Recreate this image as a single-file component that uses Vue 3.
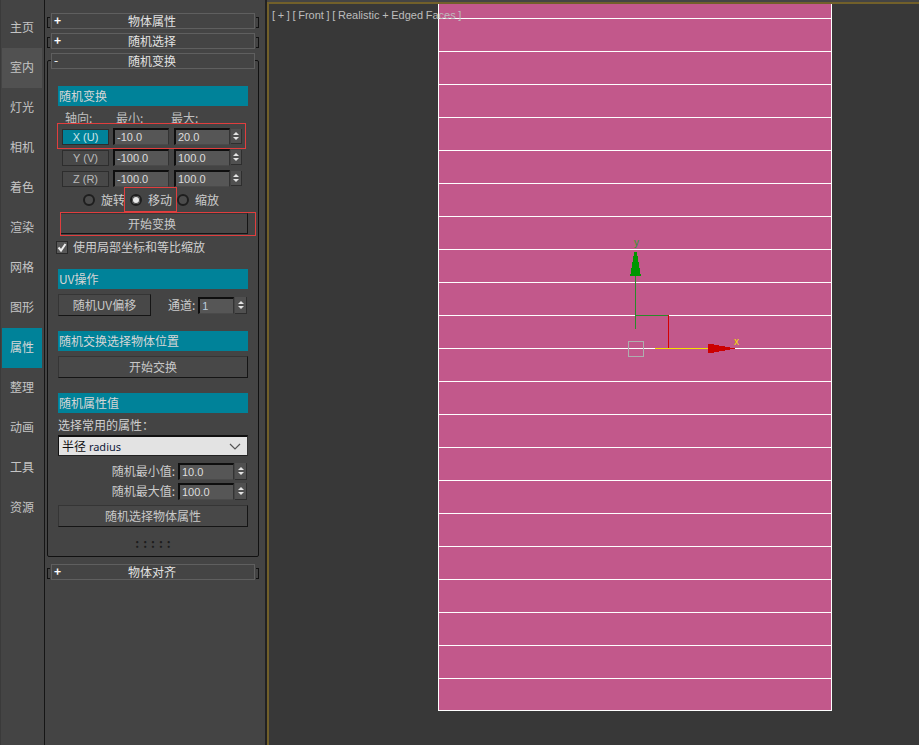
<script setup>
const tabs = ['主页', '室内', '灯光', '相机', '着色', '渲染', '网格', '图形', '属性', '整理', '动画', '工具', '资源']
const axes = [
  { name: 'X (U)', min: '-10.0', max: '20.0', on: true },
  { name: 'Y (V)', min: '-100.0', max: '100.0' },
  { name: 'Z (R)', min: '-100.0', max: '100.0' },
]
const strips = Array.from({ length: 21 })
</script>

<template>
  <div class="app">
    <nav class="tabs">
      <div
        v-for="t in tabs"
        :key="t"
        class="tab"
        :class="{ hover: t === '室内', active: t === '属性' }"
      >{{ t }}</div>
    </nav>

    <aside class="panel">
      <div class="roll closed"><i class="sign">+</i>物体属性</div>
      <div class="roll closed"><i class="sign">+</i>随机选择</div>
      <div class="roll open"><i class="sign minus">-</i>随机变换</div>

      <section class="body">
        <h4 class="bar">随机变换</h4>
        <div class="heads"><span>轴向:</span><span>最小:</span><span>最大:</span></div>

        <div class="axes">
          <div v-for="a in axes" :key="a.name" class="axis">
            <div class="axis-btn" :class="{ on: a.on }">{{ a.name }}</div>
            <div class="field w56">{{ a.min }}</div>
            <div class="field w56">{{ a.max }}</div>
            <div class="spin"><b class="up"></b><b class="down"></b></div>
          </div>
          <div class="mark mark-x"></div>
        </div>

        <div class="radios">
          <label class="radio"><i class="dot"></i>旋转</label>
          <label class="radio"><i class="dot sel"></i>移动<span class="mark mark-move"></span></label>
          <label class="radio"><i class="dot"></i>缩放</label>
        </div>

        <div class="btn start">开始变换<span class="mark mark-start"></span></div>
        <div class="check">
          <svg width="12" height="13" viewBox="0 0 12 13">
            <rect x="0.500" y="0.500" width="11" height="12" fill="#585858" stroke="#2a2a2a" />
            <path d="M2.500 6.500l2.500 3 4.500-6.500" fill="none" stroke="#f0f0f0" stroke-width="2" />
          </svg>
          使用局部坐标和等比缩放
        </div>

        <h4 class="bar uv">UV操作</h4>
        <div class="uv-row">
          <div class="btn uv-btn">随机UV偏移</div>
          <span class="chan">通道:</span>
          <div class="field w36">1</div>
          <div class="spin"><b class="up"></b><b class="down"></b></div>
        </div>

        <h4 class="bar pos">随机交换选择物体位置</h4>
        <div class="btn swap">开始交换</div>

        <h4 class="bar attr">随机属性值</h4>
        <div class="pick">选择常用的属性：</div>
        <div class="select">
          <span><em>半径</em> radius</span>
          <svg width="12" height="7" viewBox="0 0 12 7"><path d="M1 1l5 5 5-5" fill="none" stroke="#555" stroke-width="1.200" /></svg>
        </div>
        <div class="val-row first-val">
          <span>随机最小值:</span>
          <div class="field w56">10.0</div>
          <div class="spin"><b class="up"></b><b class="down"></b></div>
        </div>
        <div class="val-row">
          <span>随机最大值:</span>
          <div class="field w56">100.0</div>
          <div class="spin"><b class="up"></b><b class="down"></b></div>
        </div>
        <div class="btn rnd">随机选择物体属性</div>
        <div class="grip">:::::</div>
      </section>

      <div class="roll closed last"><i class="sign">+</i>物体对齐</div>
    </aside>

    <main class="view">
      <div class="label">[ + ] [ Front ] [ Realistic + Edged Faces ]</div>
      <div class="plane">
        <div v-for="(s, i) in strips" :key="i" class="strip"></div>
      </div>
      <!-- viewBox uses page coordinates so the numbers read off the reference directly -->
      <svg class="gizmo" width="140" height="135" viewBox="610 229 140 135" shape-rendering="crispEdges">
        <text x="634" y="246" class="gy">y</text>
        <path d="M635.500 276v53M635 315.500h34" stroke="#2a8a2a" fill="none" />
        <path d="M668.500 315v33" stroke="#d40000" fill="none" />
        <path d="M655 348.500h53" stroke="#f4e000" fill="none" />
        <path d="M634 252h3v4h1v6h1v6h1v6h1v2h-11v-2h1v-6h1v-6h1v-6h1z" fill="#009600" />
        <path d="M708 344h6v1h5v1h6v1h5v1h5v1h-5v1h-5v1h-6v1h-5v1h-6z" fill="#cc0000" />
        <text x="734" y="345" class="gx">x</text>
        <rect x="628.500" y="341.500" width="15" height="15" fill="none" stroke="#aeaeae" />
      </svg>
    </main>
  </div>
</template>

<style>
html, body { margin: 0; background: #444; }
</style>

<style scoped>
.app {
  display: flex;
  width: 919px;
  height: 745px;
  overflow: hidden;
  background: #444;
  color: #ccc;
  font: 12px/16px "Noto Sans CJK SC", "Liberation Sans", sans-serif;
}

.tabs {
  width: 45px;
  padding: 8px 0 0 1px;
  box-sizing: border-box;
  border-left: 1px solid #3a3a3a;
  border-right: 1px solid #161616;
  flex-shrink: 0;
}
.tab {
  width: 40px;
  height: 40px;
  line-height: 38px;
  text-align: center;
  color: #c4c4c4;
}
.tab.hover { background: #515151; }
.tab.active { background: #008299; color: #d8d8d8; }

.panel {
  width: 220px;
  flex-shrink: 0;
  padding-top: 13px;
  border-right: 2px solid #222;
}
.roll {
  position: relative;
  width: 204px;
  height: 16px;
  margin: 0 0 4px 6px;
  padding-right: 2px;
  box-sizing: border-box;
  border: 1px solid #5f5f5f;
  line-height: 14px;
  text-align: center;
  color: #e2e2e2;
}
.roll.open { margin-bottom: 0; z-index: 1; background: #444; }
.roll.last { margin-top: 7px; }
/* the little [ ] marks either side of a collapsed rollout */
.closed::before,
.closed::after {
  content: "";
  position: absolute;
  top: 3px;
  width: 2px;
  height: 9px;
  border: 1px solid #111;
}
.closed::before { left: -5px; border-right: 0; }
.closed::after { right: -5px; border-left: 0; }
.sign {
  position: absolute;
  left: 2px;
  top: -1px;
  font-style: normal;
  font-weight: 700;
  color: #fff;
}
.sign.minus { font-weight: 400; }

.body {
  width: 212px;
  height: 497px;
  margin: -9px 0 0 2px;
  padding: 25px 10px 0;
  box-sizing: border-box;
  border: 1px solid #111;
  border-radius: 2px;
}

.bar {
  height: 20px;
  margin: 0;
  padding-left: 1px;
  background: #008299;
  color: #d6d6d6;
  font-size: 12px;
  font-weight: 400;
  line-height: 20px;
}
.heads {
  display: flex;
  height: 20px;
  padding: 4px 0 0 7px;
  box-sizing: border-box;
  color: #c0c0c0;
}
.heads span:nth-child(1) { width: 51px; }
.heads span:nth-child(2) { width: 55px; }

.axes { position: relative; }
.axis {
  display: flex;
  align-items: center;
  height: 21px;
  padding-left: 4px;
}
.axis-btn {
  width: 47px;
  height: 16px;
  margin-right: 4px;
  box-sizing: border-box;
  border: 1px solid #2d2d2d;
  line-height: 14px;
  text-align: center;
  color: #bbb;
  background: #484848;
  font-family: "Liberation Sans", sans-serif;
  font-size: 11px;
}
.axis-btn.on { background: #008299; color: #d0e6ea; }

.field {
  height: 17px;
  box-sizing: border-box;
  padding-left: 2px;
  border-style: solid;
  border-color: #0e0e0e #333 #4a4a4a #0e0e0e;
  border-width: 2px 1px 1px 2px;
  background: #565656;
  color: #ddd;
  line-height: 14px;
  font-family: "Liberation Sans", sans-serif;
  font-size: 11px;
}
.field + .field { margin-left: 5px; }
.w56 { width: 56px; }
.w36 { width: 36px; color: #bcd; }

.spin {
  display: flex;
  flex-direction: column;
  justify-content: center;
  gap: 2px;
  align-items: center;
  width: 11px;
  height: 15px;
  margin-left: 1px;
  background: #505050;
  border-right: 1px solid #2e2e2e;
  border-bottom: 1px solid #2e2e2e;
  box-sizing: border-box;
}
.up, .down { width: 0; height: 0; border: 3px solid transparent; }
.up { border-top-width: 0; border-bottom: 3px solid #e4e4e4; }
.down { border-bottom-width: 0; border-top: 3px solid #e4e4e4; }

.val-row .spin, .uv-row .spin { width: 12px; height: 17px; }

.mark { position: absolute; border: 1px solid #e03e3e; pointer-events: none; }
.mark-x { left: -1px; top: -3px; width: 187px; height: 24px; }
.mark-move { left: -7px; top: -5px; width: 51px; height: 23px; }
.mark-start { left: -1px; top: -2px; width: 194px; height: 22px; }

.radios {
  display: flex;
  height: 24px;
  padding: 3px 0 0 26px;
  box-sizing: border-box;
}
.radio {
  position: relative;
  display: flex;
  align-items: center;
  gap: 6px;
  height: 16px;
  margin-right: 6px;
}
.dot {
  width: 8px;
  height: 8px;
  border-radius: 50%;
  background: #4c4c4c;
  border: 2px solid #1e1e1e;
  margin-left: -1px;
}
.dot.sel { background: #e8e8e8; box-shadow: inset 0 0 0 1px #4a4a4a; }

.btn {
  position: relative;
  box-sizing: border-box;
  height: 22px;
  line-height: 20px;
  text-align: center;
  border: 1px solid #111;
  border-color: #353535 #151515 #151515 #353535;
  background: #484848;
  color: #c8c8c8;
}
.start { margin-left: 2px; height: 21px; padding-right: 4px; }
.check {
  display: flex;
  align-items: center;
  gap: 5px;
  height: 16px;
  margin: 5px 0 0 -2px;
  color: #d0d0d0;
}
.uv { margin-top: 14px; }
.uv-row {
  display: flex;
  align-items: center;
  margin-top: 5px;
}
.uv-btn { width: 93px; }
.chan { margin: 0 3px 0 17px; }

.pos { margin-top: 15px; }
.swap { margin-top: 5px; }
.attr { margin-top: 15px; }
.pick { height: 16px; margin-top: 4px; color: #d0d0d0; }
.select {
  display: flex;
  align-items: center;
  justify-content: space-between;
  height: 21px;
  margin-top: 2px;
  padding: 0 6px 0 3px;
  box-sizing: border-box;
  background: #e3e3e3;
  border-style: solid;
  border-color: #111 #333 #222 #111;
  border-width: 2px 1px 1px 1px;
  color: #10203a;
  font-family: "Noto Sans", sans-serif;
  font-size: 11px;
}
.select em { font: 12px "Noto Sans CJK SC", sans-serif; color: #111; }
.val-row {
  display: flex;
  align-items: center;
  justify-content: flex-end;
  height: 20px;
  padding-right: 1px;
}
.val-row span { margin-right: 3px; }
.first-val { margin-top: 5px; }
.rnd { margin-top: 4px; }
.grip {
  margin-top: 8px;
  padding-left: 4px;
  text-align: center;
  color: #1c1c1c;
  font-weight: 700;
  letter-spacing: 4px;
}

.view {
  position: relative;
  flex: 1;
  margin-top: 2px;
  background: #383838;
  border-left: 2px solid #72602a;
  border-top: 2px solid #72602a;
}
.label {
  position: absolute;
  left: 3px;
  top: 3px;
  z-index: 2;
  font: 11px/16px "Liberation Sans", sans-serif;
  word-spacing: -0.4px;
  color: #bdbdbd;
  white-space: nowrap;
}
.plane {
  width: 394px;
  height: 707px;
  margin-left: 169px;
  padding-top: 14px;
  box-sizing: border-box;
  overflow: hidden;
  background: #c2588b;
  border: solid #fff;
  border-width: 0 1px 1px;
}
.strip {
  height: 33px;
  box-sizing: border-box;
  border-top: 1px solid #fff;
}
.gizmo {
  position: absolute;
  left: 341px;
  top: 225px;
}
.gy, .gx { font: 10px "Liberation Sans", sans-serif; }
.gy { fill: #2a9a2a; }
.gx { fill: #f4e000; }
</style>
